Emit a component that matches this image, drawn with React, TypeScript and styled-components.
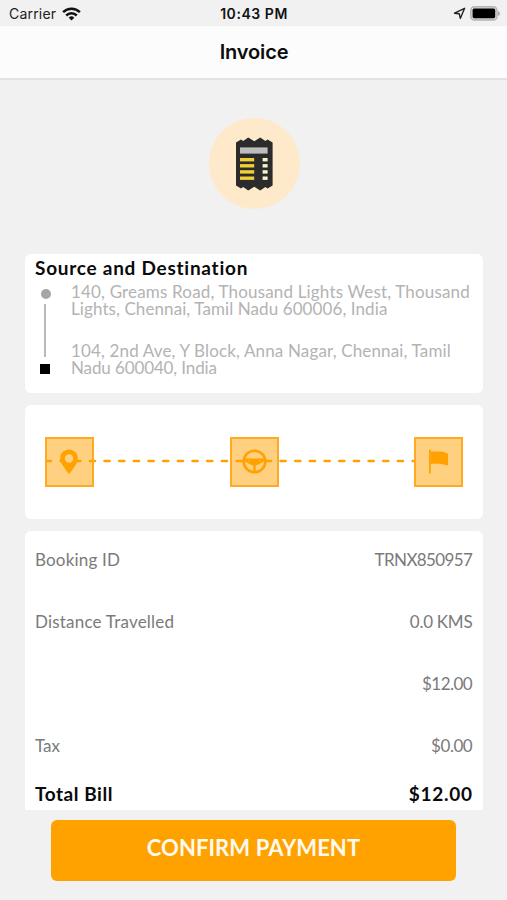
import React from "react";
import styled, { createGlobalStyle } from "styled-components";

const ORANGE = "#ffa200";

const GlobalStyle = createGlobalStyle`
  * { box-sizing: border-box; }
  body { margin: 0; background: #f1f1f1; }
`;

const Screen = styled.div`
  width: 507px;
  height: 900px;
  overflow: hidden;
  background: #f1f1f1;
  display: flex;
  flex-direction: column;
  font-family: Lato, sans-serif;
  font-kerning: normal;
  font-variant-ligatures: none;
`;

const StatusBar = styled.div`
  height: 26px;
  flex: none;
  display: grid;
  grid-template-columns: 1fr auto 1fr;
  align-items: center;
  padding: 2px 7px 0 9px;
  font: 400 14px/20px Inter, sans-serif;
  color: #222;
`;

const Carrier = styled.div`
  display: flex;
  align-items: center;
  gap: 6px;
  letter-spacing: 0.2px;
`;

const Clock = styled.div`
  font-weight: 600;
  letter-spacing: 0.55px;
  margin-left: -1px;
  color: #111;
`;

const Indicators = styled.div`
  display: flex;
  align-items: center;
  justify-content: flex-end;
  gap: 4px;
  margin-top: -2px;
`;

const NavBar = styled.header`
  height: 54px;
  flex: none;
  display: flex;
  align-items: center;
  justify-content: center;
  background: #fcfcfc;
  border-bottom: 2px solid #e2e2e2;
`;

const NavTitle = styled.h1`
  margin: 0 0 0 1px;
  font: 600 20px/24px Inter, sans-serif;
  letter-spacing: -0.15px;
  color: #0c0c0c;
`;

const Content = styled.main`
  flex: none;
  padding: 38px 24.5px 0 25px;
  display: flex;
  flex-direction: column;
`;

const Badge = styled.div`
  width: 91px;
  height: 91px;
  margin: 0 0 45px 183.5px;
  border-radius: 50%;
  background: #ffe9cb;
  display: flex;
  align-items: center;
  justify-content: center;
`;

const Card = styled.section<{ $height: number; $clipped?: boolean }>`
  height: ${(p) => p.$height}px;
  margin-bottom: 12.5px;
  background: #fff;
  border-radius: ${(p) => (p.$clipped ? "6px 6px 0 0" : "6px")};
  padding: 0 10px;
`;

const SectionTitle = styled.h2`
  margin: 0;
  padding-top: 2px;
  font-size: 19px;
  font-weight: 700;
  line-height: 24px;
  letter-spacing: 0.74px;
  color: #0a0a0a;
`;

const Places = styled.div`
  display: grid;
  grid-template-columns: 36px 1fr;
  padding-top: 3px;
`;

const Marks = styled.div`
  display: flex;
  flex-direction: column;
  align-items: center;
  width: 20px;
  padding-top: 6px;
`;

const SourceDot = styled.span`
  width: 10px;
  height: 10px;
  margin-left: 1px;
  border-radius: 50%;
  background: #a6a6a6;
`;

const Connector = styled.span`
  width: 1.5px;
  height: 53px;
  margin: 5px 0 7px;
  background: #b9b9b9;
`;

const DestinationSquare = styled.span`
  width: 10px;
  height: 10px;
  background: #000;
`;

const Address = styled.p`
  margin: 0 0 24px;
  font-size: 17px;
  font-weight: 400;
  line-height: 17.3px;
  color: #b3b3b3;
`;

const Line = styled.span<{ $track: number }>`
  display: block;
  white-space: nowrap;
  letter-spacing: ${(p) => p.$track}px;
`;

const Route = styled.div`
  position: relative;
  display: flex;
  justify-content: space-between;
  padding: 32px 9.5px 0 9.5px;
`;

const Dashes = styled.svg`
  position: absolute;
  left: 10px;
  top: 54px;
`;

const Stop = styled.div<{ $nudge?: number }>`
  position: relative;
  margin-left: ${(p) => p.$nudge ?? 0}px;
  width: 49px;
  height: 49.5px;
  border: 2px solid #ffaa22;
  background: rgba(255, 162, 0, 0.5);
  background-clip: padding-box;
  display: flex;
  align-items: center;
  justify-content: center;
`;

const Bill = styled.div`
  display: flex;
  flex-direction: column;
  gap: 42px;
  padding-top: 18.5px;
`;

const Row = styled.div`
  display: flex;
  justify-content: space-between;
  height: 20px;
  font-size: 17px;
  line-height: 20px;
  color: #7a7a7a;
`;

const TotalRow = styled(Row)`
  margin-top: -13.5px;
  font-size: 19px;
  font-weight: 700;
  color: #0a0a0a;
`;

const Cell = styled.span<{ $track: number }>`
  letter-spacing: ${(p) => p.$track}px;
`;

const Amount = styled(Cell)`
  margin-left: auto;
  margin-right: ${(p) => -p.$track / 2}px;
`;

const ConfirmButton = styled.button`
  flex: none;
  width: 405px;
  height: 61px;
  margin: -2px 0 0 51px;
  padding: 0 0 5px;
  border: 0;
  border-radius: 6px;
  background: ${ORANGE};
  color: #fffaf0;
  font: 700 22px/26px Lato, sans-serif;
  letter-spacing: 0.08px;
`;

const WifiIcon = () => (
  <svg width="19" height="14" viewBox="0 0 19 14" fill="none" stroke="#111" strokeWidth="2.5">
    <path d="M1.1 5.1a12 12 0 0 1 16.8 0" />
    <path d="M4.2 8.5a7.6 7.6 0 0 1 10.6 0" />
    <path d="M6.7 10.7a4 4 0 0 1 5.6 0L9.5 13.6z" fill="#111" stroke="none" />
  </svg>
);

const LocationIcon = () => (
  <svg width="13" height="13" viewBox="0 0 13 13" fill="none" stroke="#222" strokeWidth="1.4" strokeLinejoin="round">
    <path d="M1.5 6.2 11.6 1.3 7.3 11.4 6.3 6.8z" />
  </svg>
);

const BatteryIcon = () => (
  <svg width="30" height="15" viewBox="0 0 30 15">
    <rect x="0.8" y="0.8" width="26.2" height="13.2" rx="3.6" fill="#d5d5d5" stroke="#b4b4b4" strokeWidth="1.4" />
    <rect x="2.6" y="2.6" width="22.6" height="9.6" rx="1.6" fill="#000" />
    <path d="M28 5v5q2-.7 2-2.5T28 5z" fill="#aaa" />
  </svg>
);

const ReceiptIcon = () => (
  <svg width="37" height="54" viewBox="0 0 37 54">
    <path
      d="M0 5.4 5 2.6 7.2 4 12.2.4 18.3 4.3 24.2.4 29.4 4 31.6 2.6 36.6 5.4V48.6L31.6 51.4 29.4 50 24.2 53.6 18.3 49.7 12.2 53.6 7.2 50 5 51.4 0 48.6z"
      fill="#2b2b2b"
    />
    <rect x="4" y="10.4" width="27.6" height="6.2" fill="#bdbdbd" />
    {[21, 27.1, 33.2, 39.5].map((y) => (
      <g key={y}>
        <rect x="4" y={y} width="14.2" height="3.4" fill="#f0cf38" />
        <rect x="26.6" y={y} width="5" height="3.4" fill="#f3f5cf" />
      </g>
    ))}
  </svg>
);

const PinIcon = () => (
  <svg width="18" height="26" viewBox="0 0 18 26">
    <path
      d="M9 .6C4 .6.2 4.3.2 9c0 3 1.2 5.6 3 8.2C5 20 7 22.4 9 25.2c2-2.8 4-5.2 5.8-8 1.8-2.6 3-5.2 3-8.2C17.8 4.3 14 .6 9 .6z"
      fill={ORANGE}
    />
    <circle cx="9" cy="9.5" r="4.2" fill="#ffd080" />
  </svg>
);

const WheelIcon = () => (
  <svg width="25" height="25" viewBox="0 0 25 25" fill="none" stroke={ORANGE}>
    <circle cx="12.5" cy="12.5" r="10.8" strokeWidth="2.6" />
    <path d="M2.5 10.6H22.5" strokeWidth="2.2" />
    <path d="M3.5 11.5 11 15.5M21.5 11.5 14 15.5M12.5 15V23" strokeWidth="2.4" />
    <path d="M8 11H17V13L14.3 16.5H10.7L8 13z" fill={ORANGE} stroke="none" />
  </svg>
);

const FlagIcon = () => (
  <svg width="20" height="25" viewBox="0 0 20 25" fill={ORANGE}>
    <path d="M0 .5H1.8V24.5H0z" />
    <path d="M1.8 2.5C5.500 2.600 8.500 2.400 12 2.600 15.500 3 17.500 4.300 19 4.800V16.200C15.500 16.400 14 15 10.500 14.800 7 14.600 4.500 14.800 1.800 14.800z" />
  </svg>
);

export default function App() {
  return (
    <>
      <GlobalStyle />
      <Screen>
        <StatusBar>
          <Carrier>
            Carrier
            <WifiIcon />
          </Carrier>
          <Clock>10:43 PM</Clock>
          <Indicators>
            <LocationIcon />
            <BatteryIcon />
          </Indicators>
        </StatusBar>
        <NavBar>
          <NavTitle>Invoice</NavTitle>
        </NavBar>
        <Content>
          <Badge>
            <ReceiptIcon />
          </Badge>
          <Card $height={138.5}>
            <SectionTitle>Source and Destination</SectionTitle>
            <Places>
              <Marks>
                <SourceDot />
                <Connector />
                <DestinationSquare />
              </Marks>
              <div>
                <Address>
                  <Line $track={0.17}>140, Greams Road, Thousand Lights West, Thousand</Line>
                  <Line $track={0.09}>Lights, Chennai, Tamil Nadu 600006, India</Line>
                </Address>
                <Address>
                  <Line $track={0.15}>104, 2nd Ave, Y Block, Anna Nagar, Chennai, Tamil</Line>
                  <Line $track={-0.12}>Nadu 600040, India</Line>
                </Address>
              </div>
            </Places>
          </Card>
          <Card $height={113.5}>
            <Route>
              <Dashes width="372" height="4" viewBox="0 0 372 4">
                <path d="M0.8 2H370" stroke={ORANGE} strokeWidth="2.4" strokeLinecap="round" strokeDasharray="5.2 9.47" />
              </Dashes>
              <Stop>
                <PinIcon />
              </Stop>
              <Stop $nudge={1.6}>
                <WheelIcon />
              </Stop>
              <Stop>
                <FlagIcon />
              </Stop>
            </Route>
          </Card>
          <Card $height={278.5} $clipped>
            <Bill>
              <Row>
                <Cell $track={0.18}>Booking ID</Cell>
                <Amount $track={-0.63}>TRNX850957</Amount>
              </Row>
              <Row>
                <Cell $track={0.2}>Distance Travelled</Cell>
                <Amount $track={-0.25}>0.0 KMS</Amount>
              </Row>
              <Row>
                <Amount $track={-0.5}>$12.00</Amount>
              </Row>
              <Row>
                <Cell $track={0}>Tax</Cell>
                <Amount $track={-0.45}>$0.00</Amount>
              </Row>
              <TotalRow>
                <Cell $track={0.55}>Total Bill</Cell>
                <Amount $track={0.73}>$12.00</Amount>
              </TotalRow>
            </Bill>
          </Card>
        </Content>
        <ConfirmButton>CONFIRM PAYMENT</ConfirmButton>
      </Screen>
    </>
  );
}
